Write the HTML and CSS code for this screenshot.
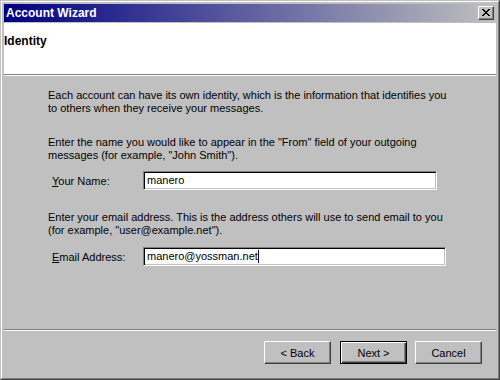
FILE: index.html
```html
<!DOCTYPE html>
<html>
<head>
<meta charset="utf-8">
<title>Account Wizard</title>
<link rel="stylesheet" href="styles.css">
</head>
<body>
<div class="window">
  <div class="frame">
    <div class="titlebar">
      <span class="title">Account Wizard</span>
      <button class="close" type="button" aria-label="Close">
        <svg width="8" height="7" viewBox="0 0 8 7" shape-rendering="crispEdges"><path fill="#000" d="M0 0h2v1H0zM6 0h2v1H6zM1 1h2v1H1zM5 1h2v1H5zM2 2h4v1H2zM3 3h2v1H3zM2 4h4v1H2zM1 5h2v1H1zM5 5h2v1H5zM0 6h2v1H0zM6 6h2v1H6z"/></svg>
      </button>
    </div>
    <div class="header">
      <h1 class="header-title">Identity</h1>
    </div>
    <div class="content">
      <p class="para first">Each account can have its own identity, which is the information that identifies you<br>to others when they receive your messages.</p>
      <p class="para">Enter the name you would like to appear in the "From" field of your outgoing<br>messages (for example, "John Smith").</p>
      <div class="field field-name">
        <label class="label"><u>Y</u>our Name:</label>
        <div class="input input-name">manero</div>
      </div>
      <p class="para">Enter your email address. This is the address others will use to send email to you<br>(for example, "user@example.net").</p>
      <div class="field field-email">
        <label class="label"><u>E</u>mail Address:</label>
        <div class="input input-email">manero@yossman.net<span class="caret"></span></div>
      </div>
    </div>
    <div class="footer">
      <button class="btn btn-back" type="button">&lt; Back</button>
      <button class="btn btn-default" type="button">Next &gt;</button>
      <button class="btn btn-cancel" type="button">Cancel</button>
    </div>
  </div>
</div>
</body>
</html>
```

FILE: styles.css
```css
* { box-sizing: border-box; }
html, body {
  margin: 0;
  padding: 0;
  width: 500px;
  height: 380px;
  overflow: hidden;
  background: #c0c0c0;
}
body {
  font-family: "Liberation Sans", Arial, sans-serif;
  font-size: 11px;
  line-height: 13px;
  color: #000;
}
.window {
  width: 500px;
  height: 380px;
  border: 1px solid;
  border-color: #c0c0c0 #404040 #404040 #c0c0c0;
}
.frame {
  height: 100%;
  border: 1px solid;
  border-color: #fff #808080 #808080 #fff;
  padding: 2px;
  background: #c0c0c0;
  display: flex;
  flex-direction: column;
}
.titlebar {
  height: 18px;
  flex: none;
  margin-bottom: 1px;
  background: linear-gradient(to right, #000080 0%, #c0c0c0 100%);
  display: flex;
  align-items: center;
  padding: 0 2px 0 2px;
}
.title {
  flex: 1;
  color: #fff;
  font-weight: bold;
  font-size: 12px;
  line-height: 14px;
}
.close {
  width: 16px;
  height: 14px;
  padding: 0;
  margin: 0;
  background: #c0c0c0;
  border: 1px solid;
  border-color: #fff #404040 #404040 #fff;
  box-shadow: inset -1px -1px #808080;
  display: flex;
  align-items: center;
  justify-content: center;
}
.close svg { display: block; margin-left: -1px; margin-top: -1px; }
.header {
  height: 52px;
  flex: none;
  background: #fff;
  border-bottom: 1px solid #808080;
  box-shadow: 0 1px 0 #fff;
  margin-bottom: 1px;
  padding-top: 11px;
}
.header-title {
  margin: 0;
  font-size: 12px;
  line-height: 14px;
  font-weight: bold;
}
.content {
  flex: 1;
  padding-top: 13px;
}
.para {
  margin: 21px 0 0 44px;
}
.para.first { margin-top: 0; }
.field {
  display: flex;
  align-items: center;
  padding-left: 48px;
  margin-top: 9px;
}
.field-email { margin-top: 10px; }
.label {
  width: 91px;
  flex: none;
  padding-top: 2px;
}
.input {
  height: 19px;
  background: #fff;
  border: 1px solid;
  border-color: #808080 #fff #fff #808080;
  box-shadow: inset 1px 1px #000, inset -1px -1px #c0c0c0;
  padding: 2px 3px 0 3px;
  white-space: nowrap;
  display: flex;
  align-items: flex-start;
}
.input-name { width: 294px; }
.input-email { width: 303px; }
.caret {
  display: inline-block;
  width: 1px;
  height: 13px;
  background: #000;
  margin-left: 0;
}
.footer {
  flex: none;
  height: 47px;
  border-top: 1px solid #808080;
  box-shadow: inset 0 1px 0 #fff;
  padding: 11px 14px 12px 0;
  display: flex;
  justify-content: flex-end;
  align-items: flex-start;
}
.btn {
  width: 67px;
  height: 23px;
  margin: 0;
  padding: 0;
  font-family: "Liberation Sans", Arial, sans-serif;
  font-size: 11px;
  color: #000;
  background: #c0c0c0;
  border: 1px solid;
  border-color: #fff #404040 #404040 #fff;
  box-shadow: inset -1px -1px #808080;
}
.btn-back { margin-right: 9px; }
.btn-default {
  margin-right: 8px;
  border-color: #000;
  box-shadow: inset 1px 1px #fff, inset -1px -1px #404040, inset -2px -2px #808080;
}
```
